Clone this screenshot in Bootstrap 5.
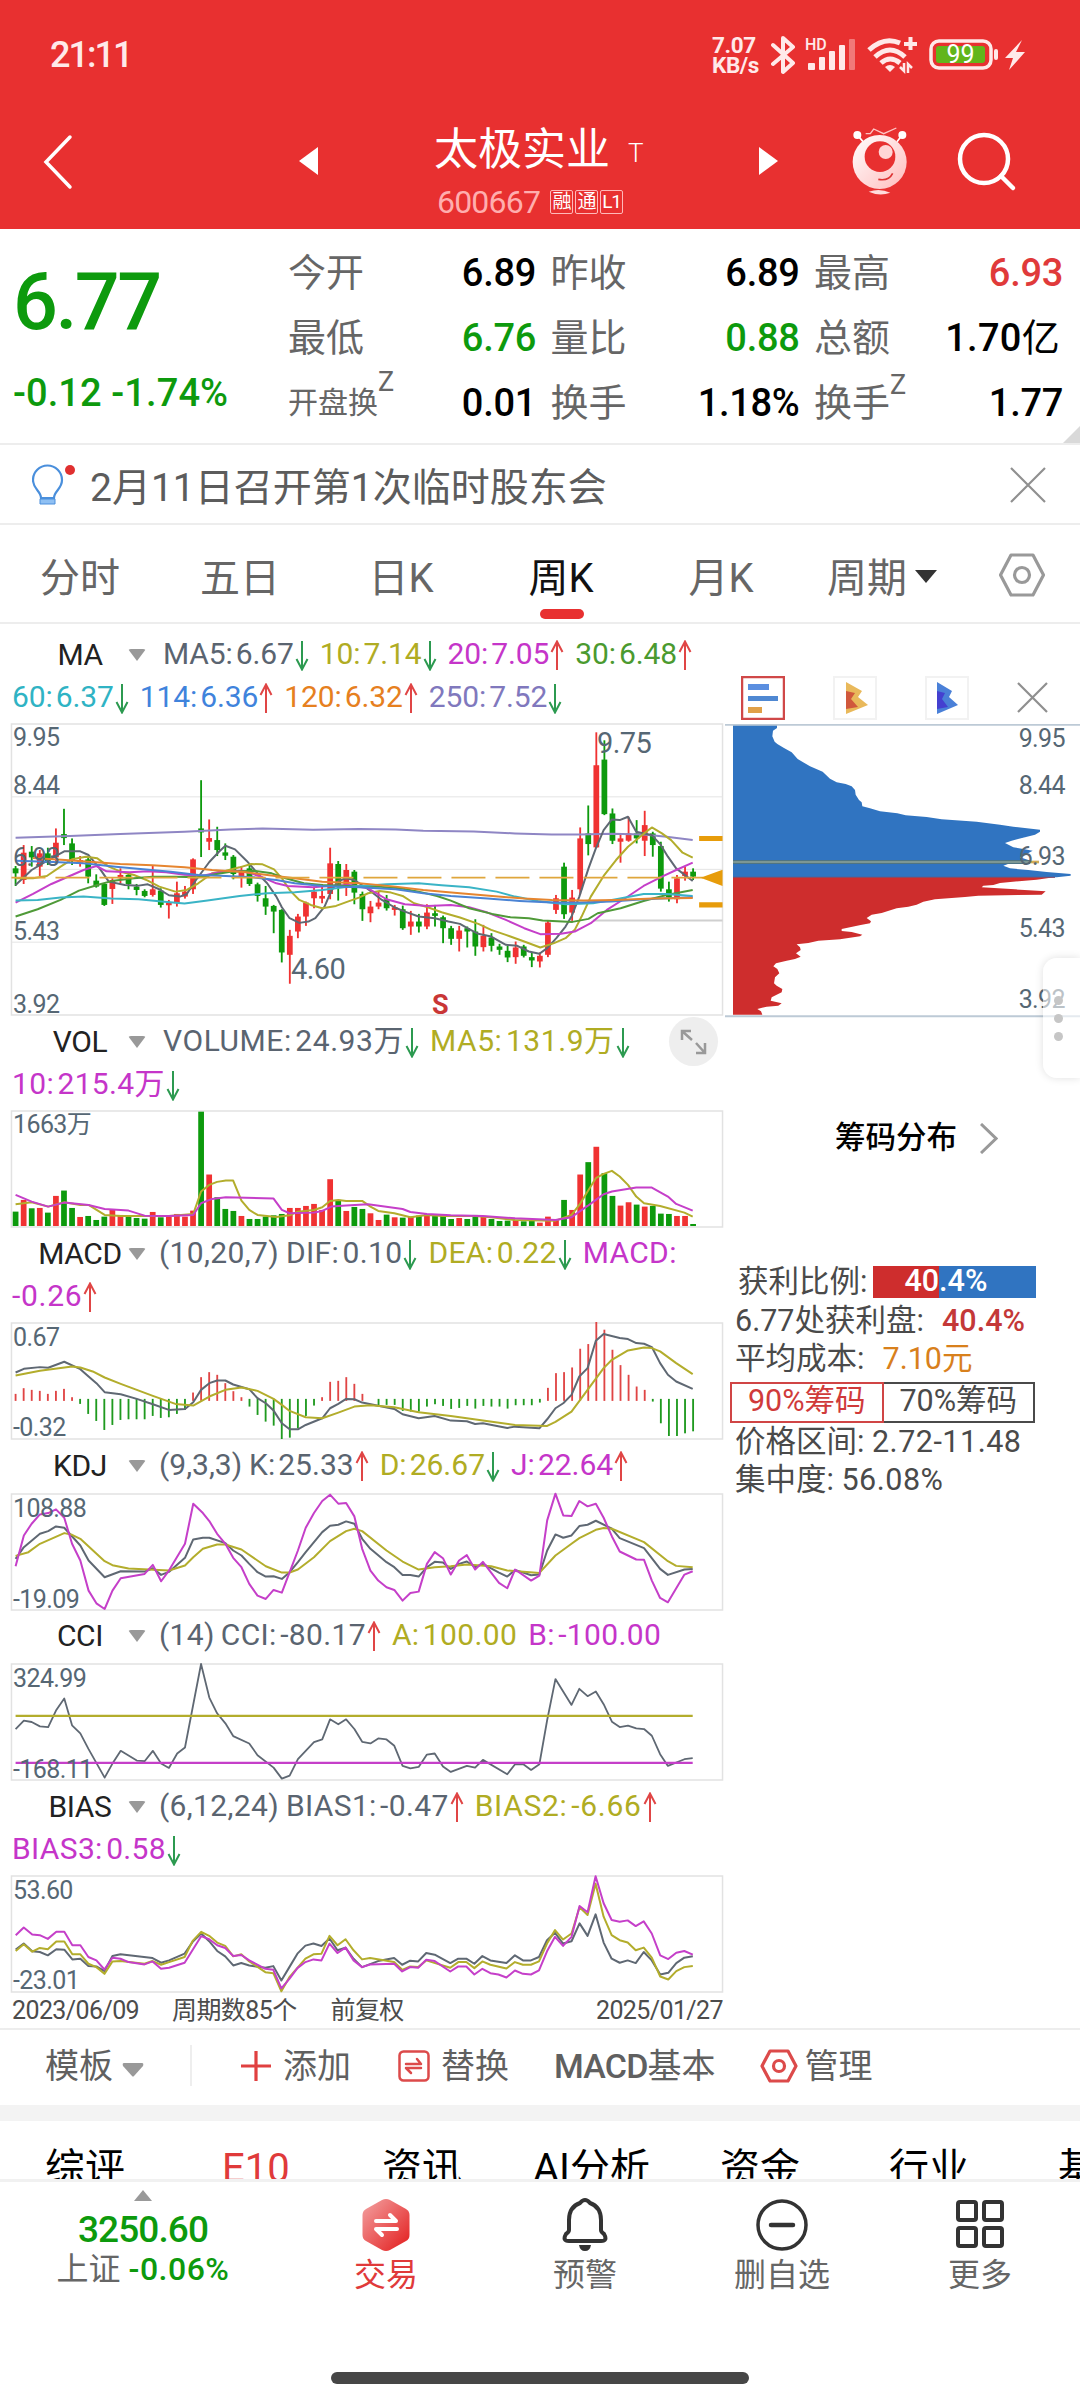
<!DOCTYPE html>
<html lang="zh-CN">
<head>
  <meta charset="UTF-8">
  <meta name="viewport" content="width=device-width, initial-scale=1">
  <title>太极实业 600667</title>
  <link rel="stylesheet" href="https://cdn.jsdelivr.net/npm/bootstrap@5.3.0/dist/css/bootstrap.min.css">
  <style>
    :root { --red: #e83030; --up: #e03a3a; --down: #0d9a0d; --ink: #333; --soft: #666; --rule: #ededed;
      --slate: #5a6470; --olive: #b0ac23; --pink: #c535c9; --axis: #566774; }
    body { font-family: Roboto, "Noto Sans CJK SC", sans-serif; width: 1080px; height: 2400px; background: #fff; color: var(--ink); overflow: hidden; line-height: 1; }
    svg { display: block; flex: none; }
    .up { color: var(--up); }
    .down { color: var(--down); }

    .statusbar { height: 110px; background: var(--red); color: #ffe9e9; padding-left: 50px; }
    .clock { font-size: 36px; font-weight: 500; letter-spacing: -2px; }
    .speed { font-size: 22.5px; line-height: 20px; font-weight: 700; letter-spacing: -.4px; width: 59px; }
    .titlebar { height: 119px; background: var(--red); color: #fff; padding-left: 43px; }
    .stock-name { font-size: 44px; line-height: 50px; padding-top: 4px; }
    .stock-name span { font-size: 26px; font-weight: 300; padding: 6px 0 0 2px; }
    .stock-code { font-size: 32px; letter-spacing: -.8px; color: #ffaeae; }
    .tag { width: 23px; height: 24px; border: 1px solid #ffb9b9; border-radius: 2px; font-size: 19px; line-height: 22px; text-align: center; color: #fff; letter-spacing: -1px; }

    .quote { height: 216px; border-bottom: 2px solid var(--rule); position: relative; }
    .last { font-size: 79px; font-weight: 500; letter-spacing: -2.5px; color: var(--down); line-height: 80px; }
    .diff { font-size: 38px; font-weight: 500; letter-spacing: .1px; color: var(--down); line-height: 40px; }
    .figures { display: grid; grid-template-columns: 248px 249px 249px; column-gap: 14.5px; grid-auto-rows: 65px; font-size: 38px; color: #000; padding-top: 11px; margin-left: 288px; }
    .figures div { display: flex; align-items: center; justify-content: space-between; }
    .figures span { color: var(--soft); }
    .figures b { font-weight: 500; letter-spacing: -.3px; }
    .figures sup { font-size: 27px; top: -.8em; }
    .corner { position: absolute; right: 0; bottom: 0; }

    .notice { height: 80px; border-bottom: 2px solid var(--rule); font-size: 39px; color: #5c5c5c; padding: 0 34px 0 32px; }
    .notice-text { margin: 9px auto 0 14px; letter-spacing: 0; }

    .periods { height: 99px; padding-top: 10px; border-bottom: 2px solid var(--rule); font-size: 40px; color: var(--soft); display: grid; grid-template-columns: 160px 160px 162px 158px 162px 164px 114px; text-align: center; align-items: center; }
    .periods .chosen { color: #111; position: relative; }
    .periods .chosen::after { content: ""; position: absolute; left: 58px; top: 50px; width: 44px; height: 10px; border-radius: 5px; background: var(--red); }

    .panes { width: 724px; flex: none; }
    .legend { height: 96px; padding-top: 5px; font-size: 30px; color: var(--slate); white-space: nowrap; position: relative; }
    .legend.single { height: 54.5px; }
    .legend.lead-pane { height: 100px; padding-top: 9px; letter-spacing: -.1px; }
    .legend.roomy { letter-spacing: .35px; }
    .lrow { display: flex; align-items: center; height: 43px; padding-left: 12px; gap: 11px; }
    .lrow.named { padding-left: 37px; gap: 0; }
    .lname { width: 86px; text-align: center; color: #222; letter-spacing: -.4px; }
    .tri { width: 0; border: 9px solid transparent; border-top: 12px solid #999; border-bottom: 0; margin: 0 13px 0 5px; border-radius: 3px; }
    .lrow.named .vals { display: flex; gap: 11px; }
    .vals.plain { margin-left: 4px; }
    .a-up::after, .a-down::after { content: ""; display: inline-block; width: 14px; height: 31px; margin-left: 1px; vertical-align: -7px; background: no-repeat center; }
    .a-down::after { background-image: url("data:image/svg+xml,%3Csvg xmlns='http://www.w3.org/2000/svg' width='14' height='31' fill='none' stroke='%232c9a50' stroke-width='2'%3E%3Cpath d='M7 1V29M1.5 19L7 29.5L12.500 19'/%3E%3C/svg%3E"); }
    .a-up::after { background-image: url("data:image/svg+xml,%3Csvg xmlns='http://www.w3.org/2000/svg' width='14' height='31' fill='none' stroke='%23e04545' stroke-width='2'%3E%3Cpath d='M7 30V2M1.500 12L7 1.500L12.500 12'/%3E%3C/svg%3E"); }
    .c-olive { color: var(--olive); }
    .c-pink { color: var(--pink); }
    .c-green { color: #4b9a2f; }
    .c-cyan { color: #2fb3c4; }
    .c-blue { color: #3f83dc; }
    .c-orange { color: #e6801f; }
    .c-violet { color: #8078bd; }
    .plot { position: relative; margin-left: 11px; width: 712px; height: 116px; }
    .plot svg { width: 100%; height: 100%; overflow: visible; }
    .plot.tall { height: 291px; }
    .plot path, .plot line { vector-effect: non-scaling-stroke; }
    .tick { position: absolute; left: 2px; font-size: 25px; letter-spacing: -.6px; color: var(--axis); }
    .tick.big { font-size: 29px; }
    .expand { position: absolute; left: 669px; top: 2px; width: 49px; height: 49px; border-radius: 50%; background: #eee; }
    .dates { height: 36px; padding-left: 12px; width: 723px; font-size: 25px; color: #4c4c4c; letter-spacing: -.6px; }

    .chips { width: 356px; position: relative; }
    .chip-icons { height: 100px; padding: 52px 32px 0 17px; }
    .chip-axis { position: absolute; right: 15px; font-size: 25px; letter-spacing: -.6px; color: var(--axis); }
    .chip-profile { position: relative; height: 294px; }
    .chip-link { font-size: 30.5px; font-weight: 500; color: #000; height: 40px; margin: 100px 0 0 111px; gap: 23px; }
    .chip-info { margin-top: 105px; padding-left: 11px; font-size: 30.5px; line-height: 38.5px; color: #4a4a4a; white-space: nowrap; }
    .ratio { width: 163px; height: 32px; line-height: 30px; color: #fff; background: #3074c1; position: relative; text-align: center; font-weight: 500; padding-right: 18px; margin-left: 6px; }
    .ratio i { position: absolute; left: 0; top: 0; height: 100%; background: #ce2d2d; }
    .ratio span { position: relative; }
    .switch2 { width: 305px; height: 41px; margin: 3px 0 0 -5px; line-height: 34px; text-align: center; font-size: 30.5px; }
    .switch2 div { flex: 1; border: 2px solid #4a4a4a; }
    .switch2 .on { color: #d03a3a; border-color: #d04545; }
    .handle { position: absolute; right: 0; top: 334px; width: 37px; height: 120px; border-radius: 14px 0 0 14px; background: rgba(255,255,255,.6); box-shadow: 0 0 9px rgba(0,0,0,.13); clip-path: inset(-14px 0 -14px -14px); padding: 38px 0 0 11px; }
    .handle i { display: block; width: 9px; height: 9px; border-radius: 50%; background: #c6c6c6; margin-bottom: 9px; }

    .tools { height: 77px; border-top: 2px solid var(--rule); font-size: 34px; color: #606060; padding: 0 0 4px 45px; white-space: nowrap; }
    .vline { width: 2px; height: 41px; background: #eee; margin: 0 48px 0 46px; }
    .band { height: 16px; background: #f3f3f3; }
    .subtabs { height: 61px; overflow: hidden; border-bottom: 3px solid #f1f1f1; font-size: 40px; color: #000; white-space: nowrap; padding: 28px 0 0 45px; display: grid; grid-template-columns: 177px 160px 151px 187px 169px 169px 60px; line-height: 40px; }
    .bottom { height: 170px; font-size: 32px; color: var(--soft); display: grid; grid-template-columns: 286px 200px 198px 196px 200px; }
    .bottom > div { display: flex; flex-direction: column; align-items: center; }
    .bottom svg { margin: 16px 0 7px; }
    .index-no { font-size: 37px; letter-spacing: -.9px; font-weight: 500; margin: 5px 0 5px; }
    .bottom svg.tip { margin: 8px 0 5px; }
    .homebar { width: 418px; height: 12px; border-radius: 6px; background: #464646; margin: 20px auto 0; }
  </style>
</head>
<body>

  <div class="statusbar d-flex align-items-center">
    <div class="clock me-auto">21:11</div>
    <div class="speed">7.07<br>KB/s</div>
    <svg width="26" height="40" viewBox="0 0 26 40" fill="none" stroke="#ffe9e9" stroke-width="4" stroke-linejoin="round" stroke-linecap="round"><path d="M2 10L22 28L12 37V3L22 12L2 29"/></svg>
    <svg class="ms-2" width="52" height="40" viewBox="0 0 52 40" fill="#ffe9e9"><text x="0" y="15" font-size="16" font-weight="500">HD</text><rect x="3" y="28" width="7" height="7" rx="1"/><rect x="14" y="22" width="6" height="13" rx="1"/><rect x="24" y="16" width="6" height="19" rx="1"/><rect x="34" y="10" width="6" height="25" rx="1"/><rect x="44" y="4" width="6" height="31" rx="1" opacity=".4"/></svg>
    <svg style="margin-left:10px" width="52" height="40" viewBox="0 0 52 40" fill="none" stroke="#ffe9e9" stroke-width="5"><path d="M2 15Q17 1 33 8"/><path d="M8 22Q23 8 38 22"/><path d="M14 28Q23 20 33 28" /><path d="M37 9H50M43.500 2V15" stroke-width="4"/><path d="M18 32Q23 28 28 32L23 37Z" fill="#ffe9e9" stroke="none"/><path d="M33 32L37 36V28M41 38V29L45 33" stroke-width="2.500"/></svg>
    <svg style="margin-left:10px" width="70" height="32" viewBox="0 0 70 32"><rect x="2" y="2" width="60" height="27" rx="8" fill="none" stroke="#ffe9e9" stroke-width="3.500"/><rect x="7" y="7" width="49" height="17" rx="3" fill="#62b51b"/><rect x="65" y="10" width="4" height="11" rx="2" fill="#ffe9e9"/><text x="31.500" y="24" font-size="25" text-anchor="middle" fill="#fff">99</text></svg>
    <svg style="margin:0 55px 0 6px" width="20" height="30" viewBox="0 0 20 30"><path d="M17 0L0 18H8L4 30L20 12H11Z" fill="#ffe9e9"/></svg>
  </div>

  <div class="titlebar d-flex">
    <svg style="margin-top:24px" width="30" height="56" viewBox="0 0 30 56" fill="none" stroke="#fff" stroke-width="3.500" stroke-linecap="round"><path d="M27 3L3 28L27 53"/></svg>
    <svg style="margin:37px 0 0 226px" width="20" height="28" viewBox="0 0 20 28"><path d="M19 0V28L0 14Z" fill="#fff"/></svg>
    <div style="margin-left:115px; width:326px">
      <div class="stock-name d-flex align-items-center mt-2">太极实业<span class="ms-3">T</span></div>
      <div class="d-flex align-items-center" style="gap:2px;padding:8px 0 0 3px"><span class="stock-code me-2">600667</span><span class="tag">融</span><span class="tag">通</span><span class="tag">L1</span></div>
    </div>
    <svg style="margin:37px 0 0 -1px" width="20" height="28" viewBox="0 0 20 28"><path d="M0 0V28L19 14Z" fill="#fff"/></svg>
    <svg style="margin:17px 0 0 72px" width="56" height="70" viewBox="452 322 168 210">
      <defs><linearGradient id="ball" x1="0" y1="0" x2="1" y2="1"><stop offset="0" stop-color="#fff"/><stop offset="1" stop-color="#ffbcbc"/></linearGradient></defs>
      <path d="M470 345L488 366M606 345L590 366" stroke="#fff" stroke-width="5"/><circle cx="471" cy="346" r="12" fill="#fff"/><circle cx="606" cy="346" r="12" fill="#fff"/>
      <path d="M496 342H510L520 328L550 342L588 325" fill="none" stroke="#ffc4c4" stroke-width="4"/>
      <circle cx="538" cy="427" r="81" fill="url(#ball)"/><circle cx="539" cy="411" r="46" fill="#e83030"/><circle cx="556" cy="397" r="21" fill="#ffd5d5"/>
      <path d="M534 479Q565 485 577 461" fill="none" stroke="#d33" stroke-width="5"/><path d="M505 516Q538 504 570 519Q538 531 505 516Z" fill="#ffdcdc"/>
    </svg>
    <svg style="margin:22px 0 0 50px" width="60" height="60" viewBox="0 0 60 60" fill="none" stroke="#fff" stroke-width="4.500" stroke-linecap="round"><circle cx="27" cy="27" r="24"/><path d="M44 44L56 56"/></svg>
  </div>

  <div class="quote d-flex">
    <div style="position:absolute;left:13px;top:33px">
      <div class="last">6.77</div>
      <div class="diff" style="margin-top:31px">-0.12 -1.74%</div>
    </div>
    <div class="figures">
      <div><span>今开</span><b>6.89</b></div><div><span>昨收</span><b>6.89</b></div><div><span>最高</span><b class="up">6.93</b></div>
      <div><span>最低</span><b class="down">6.76</b></div><div><span>量比</span><b class="down">0.88</b></div><div><span>总额</span><b style="letter-spacing:.3px;margin-right:3px">1.70<span style="color:#000;font-weight:400">亿</span></b></div>
      <div><span style="font-size:30px">开盘换<sup>Z</sup></span><b>0.01</b></div><div><span>换手</span><b>1.18%</b></div><div><span>换手<sup>Z</sup></span><b>1.77</b></div>
    </div>
    <svg class="corner" width="17" height="17" viewBox="0 0 17 17"><path d="M17 0V17H0Z" fill="#d9d9d9"/></svg>
  </div>

  <div class="notice d-flex align-items-center">
    <svg class="mt-1" width="44" height="44" viewBox="0 0 44 44"><path d="M9 34C9 27 1 25 1 16A14 14 0 0 1 30 16C30 25 22 27 22 34Z" fill="none" stroke="#4a8fdc" stroke-width="2.200"/><path d="M8 35H23V40H8Z" fill="#8fc0f3" stroke="#4a8fdc"/><circle cx="38" cy="6" r="5" fill="#e03030"/></svg>
    <div class="notice-text">2月11日召开第1次临时股东会</div>
    <svg width="36" height="36" viewBox="0 0 36 36" stroke="#909090" stroke-width="2.200" style="margin-top:2px"><path d="M1 1L35 35M35 1L1 35"/></svg>
  </div>

  <div class="periods">
    <div>分时</div><div>五日</div><div>日K</div><div class="chosen">周K</div><div>月K</div>
    <div class="d-flex align-items-center" style="padding-left:25px;gap:8px">周期<svg width="22" height="13" viewBox="0 0 22 13" style="margin-top:-4px"><path d="M0 0H22L11 13Z" fill="#333"/></svg></div>
    <svg style="margin-top:-8px;margin-left:33px" width="46" height="44" viewBox="0 0 46 44" fill="none" stroke="#999" stroke-width="3.200" stroke-linejoin="round"><path d="M12 2H34L44.500 22L34 42H12L1.500 22Z"/><circle cx="23" cy="22" r="7.500"/></svg>
  </div>

  <div class="d-flex">
    <div class="panes">
      <div class="legend lead-pane">
        <div class="lrow named"><span class="lname">MA</span><i class="tri"></i><div class="vals plain"><span class="a-down">MA5:&#8202;6.67</span><span class="c-olive a-down">10:&#8202;7.14</span><span class="c-pink a-up">20:&#8202;7.05</span><span class="c-green a-up">30:&#8202;6.48</span></div></div>
        <div class="lrow"><span class="c-cyan a-down">60:&#8202;6.37</span><span class="c-blue a-up">114:&#8202;6.36</span><span class="c-orange a-up">120:&#8202;6.32</span><span class="c-violet a-down">250:&#8202;7.52</span></div>
      </div>
      <div class="plot tall">
        <svg id="kline" viewBox="22 311 1551 875" preserveAspectRatio="none"></svg>
        <span class="tick" style="top:1px">9.95</span><span class="tick" style="top:49px">8.44</span><span class="tick" style="top:121px">6.93</span><span class="tick" style="top:195px">5.43</span><span class="tick" style="top:268px">3.92</span>
        <span class="tick big" style="left:586px;top:5px">9.75</span><span class="tick big" style="left:280px;top:231px">4.60</span>
        <span class="tick" style="left:421px;top:268px;color:#c93636;font-weight:700;font-size:27px">S</span>
      </div>

      <div class="legend roomy">
        <div class="lrow named"><span class="lname">VOL</span><i class="tri"></i><div class="vals plain" style="letter-spacing:.55px"><span class="a-down">VOLUME:&#8202;24.93万</span><span class="c-olive a-down">MA5:&#8202;131.9万</span></div></div>
        <div class="lrow"><span class="c-pink a-down">10:&#8202;215.4万</span></div>
        <div class="expand"><svg width="49" height="49" viewBox="0 0 49 49" fill="none" stroke="#999" stroke-width="2.500"><path d="M13 23V14H22M13 14L23 23M36 26V36H27M36 36L27 26"/></svg></div>
      </div>
      <div class="plot"><svg id="vol" viewBox="22 304 1551 347" preserveAspectRatio="none"></svg><span class="tick" style="top:1px">1663万</span></div>

      <div class="legend roomy">
        <div class="lrow named"><span class="lname">MACD</span><i class="tri"></i><div class="vals"><span style="margin-right:-4px">(10,20,7)</span><span class="a-down">DIF:&#8202;0.10</span><span class="c-olive a-down">DEA:&#8202;0.22</span><span class="c-pink">MACD:</span></div></div>
        <div class="lrow"><span class="c-pink a-up" style="letter-spacing:.7px">-0.26</span></div>
      </div>
      <div class="plot"><svg id="macd" viewBox="22 940 1551 347" preserveAspectRatio="none"></svg><span class="tick" style="top:2px">0.67</span><span class="tick" style="top:92px">-0.32</span></div>

      <div class="legend single">
        <div class="lrow named"><span class="lname">KDJ</span><i class="tri"></i><div class="vals"><span style="margin-right:-4px">(9,3,3)</span><span class="a-up">K:&#8202;25.33</span><span class="c-olive a-down">D:&#8202;26.67</span><span class="c-pink a-up">J:&#8202;22.64</span></div></div>
      </div>
      <div class="plot"><svg id="kdj" viewBox="22 161 1551 347" preserveAspectRatio="none"></svg><span class="tick" style="top:2px">108.88</span><span class="tick" style="top:93px">-19.09</span></div>

      <div class="legend single roomy">
        <div class="lrow named"><span class="lname">CCI</span><i class="tri"></i><div class="vals"><span style="margin-right:-5px">(14)</span><span class="a-up">CCI:&#8202;-80.17</span><span class="c-olive">A:&#8202;100.00</span><span class="c-pink">B:&#8202;-100.00</span></div></div>
      </div>
      <div class="plot"><svg id="cci" viewBox="22 673 1551 346" preserveAspectRatio="none"></svg><span class="tick" style="top:2px">324.99</span><span class="tick" style="top:93px">-168.11</span></div>

      <div class="legend roomy">
        <div class="lrow named"><span class="lname">BIAS</span><i class="tri"></i><div class="vals"><span style="margin-right:-4px">(6,12,24)</span><span class="a-up">BIAS1:&#8202;-0.47</span><span class="c-olive a-up" style="letter-spacing:.7px">BIAS2:&#8202;-6.66</span></div></div>
        <div class="lrow"><span class="c-pink a-down">BIAS3:&#8202;0.58</span></div>
      </div>
      <div class="plot"><svg id="bias" viewBox="22 289 1509 345" preserveAspectRatio="none"></svg><span class="tick" style="top:2px">53.60</span><span class="tick" style="top:92px">-23.01</span></div>

      <div class="dates d-flex align-items-center"><span>2023/06/09</span><span style="margin-left:33px">周期数85个</span><span style="margin-left:34px">前复权</span><span class="ms-auto">2025/01/27</span></div>
    </div>

    <div class="chips">
      <div class="chip-icons d-flex justify-content-between">
        <svg width="44" height="44" viewBox="0 0 44 44"><rect x="1" y="1" width="42" height="42" fill="#fff" stroke="#d04848" stroke-width="2.500"/><path d="M7 8H28V14H7Z" fill="#5b8fe0"/><path d="M7 20H37V25H7Z" fill="#4f88d2"/><path d="M7 31H21V37H7Z" fill="#e0a048"/></svg>
        <svg width="44" height="44" viewBox="0 0 44 44"><rect x="1" y="1" width="42" height="42" fill="#fff" stroke="#f2f2f2" stroke-width="2"/><path d="M13 6L29 15L25 21L35 29L13 38Z" fill="#e9b95b"/><path d="M13 15L22 17L18 23L25 31L13 33Z" fill="#d0583c"/></svg>
        <svg width="44" height="44" viewBox="0 0 44 44"><rect x="1" y="1" width="42" height="42" fill="#fff" stroke="#f2f2f2" stroke-width="2"/><path d="M12 6L27 15L24 21L33 29L12 38Z" fill="#4a80d8"/><path d="M12 15L20 17L17 23L23 31L12 33Z" fill="#4440d0"/></svg>
        <svg style="margin-top:6px" width="31" height="31" viewBox="0 0 31 31" stroke="#8f8f8f" stroke-width="2.200"><path d="M1 1L30 30M30 1L1 30"/></svg>
      </div>
      <div class="chip-profile">
        <svg width="356" height="294" viewBox="72 250 1068 882">
          <path fill="#3074c1" d="M99 252H231V262L219 270L217 287L224 303L232 310L252 322L275 335L293 355L330 377L368 393L390 414L410 425L437 430L455 437L465 448L467 462L477 478L485 485L487 497L510 503L540 512L592 518L617 524L680 529L725 536L830 543L900 552L940 558L1020 567V573L1005 582L975 590L935 600L915 607L940 620L970 625L998 630L980 640L960 650L985 658L930 668L910 675L930 683L985 688L1040 694L1112 700V705L1070 710H99Z"/>
          <path fill="#ce2d2d" d="M99 710H1062L1010 717L900 727L880 733L850 735L845 740L945 746L1037 752L1025 762L835 765L795 769L705 776L670 783L650 792L625 798L590 803L545 817L515 822L500 832L513 842L510 848L482 853L425 865V871L455 874L487 882L480 887L420 896L355 900L325 907L290 911L300 920L302 928L288 938L302 948L285 955L260 960L228 968L220 977L232 985L238 998L225 1010L222 1028L230 1035L247 1045L245 1055L215 1070L212 1080L245 1088L235 1095L200 1098L172 1105L183 1112L187 1122H99Z"/>
          <path d="M99 664H990" stroke="#4f7482" stroke-width="12"/><path d="M99 664H990" stroke="#8ba39a" stroke-width="5"/><path d="M988 664H1017" stroke="#d3ac55" stroke-width="8"/><path d="M99 710H1065" stroke="#7c4766" stroke-width="3"/>
          <path d="M75 252H1140M75 1127H1140" stroke="#bdcad6" stroke-width="6"/>
        </svg>
        <span class="chip-axis" style="top:2px">9.95</span><span class="chip-axis" style="top:49px">8.44</span><span class="chip-axis" style="top:120px">6.93</span><span class="chip-axis" style="top:192px">5.43</span><span class="chip-axis" style="top:263px">3.92</span>
      </div>
      <div class="chip-link d-flex align-items-center">筹码分布<svg width="18" height="31" viewBox="0 0 18 31" fill="none" stroke="#999" stroke-width="3"><path d="M1 1L16 15.500L1 30"/></svg></div>
      <div class="chip-info">
        <div class="d-flex align-items-center" style="padding-left:3px">获利比例:<div class="ratio"><i style="width:40.4%"></i><span>40.4%</span></div></div>
        <div>6.77处获利盘:&nbsp; <span style="color:#c43838;font-weight:500;margin-left:3px">40.4%</span></div>
        <div>平均成本:&nbsp; <span style="color:#d8801c;margin-left:3px">7.10元</span></div>
        <div class="switch2 d-flex"><div class="on">90%筹码</div><div style="border-left:0">70%筹码</div></div>
        <div>价格区间: <span style="letter-spacing:.5px">2.72-11.48</span></div>
        <div>集中度: <span style="letter-spacing:.5px">56.08%</span></div>
      </div>
      <div class="handle"><i></i><i></i><i></i></div>
    </div>
  </div>

  <div class="tools d-flex align-items-center">
    模板<svg style="margin:8px 0 0 9px" width="22" height="14" viewBox="0 0 22 14"><path d="M2 0H20Q22 0 21 3L12 13Q11 14 10 13L1 3Q0 0 2 0Z" fill="#999"/></svg>
    <div class="vline"></div>
    <svg width="32" height="32" viewBox="0 0 32 32" stroke="#e04040" stroke-width="3.200"><path d="M1 16H31M16 1V31"/></svg><span style="margin-left:11px">添加</span>
    <svg style="margin-left:47px" width="32" height="32" viewBox="0 0 32 32" fill="none" stroke="#dc4a4a" stroke-width="2.500" stroke-linejoin="round" stroke-linecap="round"><rect x="1.500" y="1.500" width="29" height="29" rx="4"/><path d="M8 14H23L19 9M23 18H8L13 23"/></svg><span style="margin-left:11px">替换</span>
    <span style="margin-left:45px;font-weight:500;letter-spacing:-.8px">MACD<span class="fw-normal" style="letter-spacing:0">基本</span></span>
    <svg style="margin-left:44px" width="38" height="34" viewBox="0 0 38 34" fill="none" stroke="#dc4a4a" stroke-width="3.200" stroke-linejoin="round"><path d="M10 2H28L36 17L28 32H10L2 17Z"/><circle cx="19" cy="17" r="5.500"/></svg><span style="margin-left:7px">管理</span>
  </div>
  <div class="band"></div>
  <div class="subtabs"><div>综评</div><div class="up fw-normal">E10</div><div>资讯</div><div>AI分析</div><div>资金</div><div>行业</div><div>基金</div></div>

  <div class="bottom">
    <div><svg class="tip" width="18" height="11" viewBox="0 0 18 11"><path d="M9 0L18 11H0Z" fill="#999"/></svg><div class="index-no down">3250.60</div><div>上证 <span class="down" style="letter-spacing:.5px;font-weight:500">-0.06%</span></div></div>
    <div class="up">
      <svg width="50" height="54" viewBox="0 0 50 54"><defs><linearGradient id="hex" x1="0" y1="0" x2="1" y2="1"><stop offset="0" stop-color="#f3a3a3"/><stop offset="1" stop-color="#e31b1b"/></linearGradient></defs><path d="M21 2Q25 0 29 2L45 11Q48.500 13 48.500 17V37Q48.500 41 45 43L29 52Q25 54 21 52L5 43Q1.500 41 1.500 37V17Q1.500 13 5 11Z" fill="url(#hex)"/><path d="M15 23H35L29 17M36 31H15L21 37" fill="none" stroke="#fff" stroke-width="4" stroke-linecap="round" stroke-linejoin="round"/></svg>交易</div>
    <div><svg width="46" height="54" viewBox="0 0 46 54"><path d="M18 5Q23 -1 28 5Q39 9 39 22V32Q39 34 42 36Q46 43 39 43H7Q0 43 4 36Q7 34 7 32V22Q7 9 18 5Z" fill="none" stroke="#333" stroke-width="4"/><path d="M17 47H29Q28 53 23 53T17 47Z" fill="#333"/></svg>预警</div>
    <div><svg width="52" height="54" viewBox="0 0 52 54" fill="none" stroke="#333" stroke-width="3.500" stroke-linecap="round"><circle cx="26" cy="27" r="24"/><path d="M15 27H37" stroke-width="4.500"/></svg>删自选</div>
    <div><svg width="50" height="54" viewBox="0 0 50 54" fill="none" stroke="#333" stroke-width="4"><rect x="3" y="4" width="18" height="18" rx="2"/><rect x="29" y="4" width="18" height="18" rx="2"/><rect x="3" y="30" width="18" height="18" rx="2"/><rect x="29" y="30" width="18" height="18" rx="2"/></svg>更多</div>
  </div>
  <div class="homebar"></div>

  <script src="https://cdn.jsdelivr.net/npm/bootstrap@5.3.0/dist/js/bootstrap.bundle.min.js"></script>
  <script>
    const UP = "#f03232", DOWN = "#0d9a0d";
    const SLATE = "#5f6873", OLIVE = "#b3ad2c", PINK = "#c53fc9";
    const x = i => 32 + i * 17.57;

    const rect = (cx, top, bottom, w, color) =>
      `<rect x="${cx - w / 2}" y="${top}" width="${w}" height="${bottom - top}" fill="${color}"/>`;
    const curve = (pts, color, w = 2) =>
      `<path d="M${pts.trim().split(" ").join("L")}" fill="none" stroke="${color}" stroke-width="${w}" stroke-linejoin="round"/>`;
    const frame = (top, bottom, right = 1572) =>
      `<path d="M23 ${top}H${right}V${bottom}H23Z" fill="none" stroke="#e2e2e2" stroke-width="1.500"/>`;
    const draw = (id, html) => { document.getElementById(id).innerHTML = html; };

    // high, low, body top, body bottom
    const candles = `g738 798 745 760,r675 792 698 780,g678 740 695 712,r690 768 700 740,g683 735 700 728,r625 725 668 712,g566 675 642 654,g655 735 670 720,r708 740 720 728,g712 790 718 770,g763 803 782 800,g790 858 792 855,r775 852 780 807,r745 790 765 775,g757 808 765 792,g792 826 800 810,g808 832 813 828,r738 830 808 825,g805 863 812 855,r840 896 848 856,r785 860 820 850,r798 836 815 830,r715 822 718 808,g480 711 625 637,r598 690 654 665,g620 708 660 690,g670 720 697 707,g705 778 710 762,r738 803 752 768,g735 798 745 792,g788 845 793 828,g798 885 835 860,g855 940 858 875,g868 1028 870 998,r930 1092 948 1005,r882 955 890 935,r845 918 848 890,r800 865 815 835,r792 850 828 836,r683 838 730 822,g723 842 732 800,r732 828 750 795,g750 853 755 818,g815 903 822 868,r843 907 860 880,r815 868 848 860,g825 872 838 865,r855 887 862 870,g857 930 868 925,r873 945 905 920,g882 938 905 920,r853 928 878 920,g855 920 880 888,g887 970 892 925,g918 975 925 957,r918 995 932 957,g920 983 925 935,g898 1008 935 980,r915 995 948 982,g940 995 953 978,g972 1005 980 990,g978 1027 993 1013,r965 1032 983 1012,g975 1013 980 1008,g998 1042 1012 1022,r998 1043 1008 1025,r903 1012 908 1005,r825 882 835 870,g728 897 740 883,r810 903 833 878,r622 823 655 808,g556 706 640 672,r336 684 435 682,g360 585 418 582,g565 672 580 662,r640 728 655 665,r590 665 640 662,g600 670 640 655,r572 708 615 662,g635 710 640 675,g665 815 678 806,g785 845 808 832,r765 850 775 838,r740 782 755 768,g745 780 755 770`
      .split(",").map(s => ({ color: s[0] === "r" ? UP : DOWN, v: s.slice(1).split(" ").map(Number) }));

    draw("kline",
      frame(311, 1186) +
      `<path d="M23 530H1572M23 748H1572M23 967H1572" stroke="#e4e4e4" stroke-width="1"/><path d="M1290 902H1572" stroke="#cfcfcf" stroke-width="2"/>` +
      candles.map((c, i) => rect(x(i), c.v[0], c.v[1], 4, c.color) + rect(x(i), c.v[2], c.v[3], 12.5, c.color)).join("") +
      curve("32,653 150,648 260,642 400,635 500,628 570,625 680,629 780,627 860,628 920,632 1030,634 1120,640 1200,643 1260,643 1330,641 1400,643 1450,650 1507,660", "#8f86c4") +
      curve("32,795 67,750 103,720 138,694 173,694 191,705 215,745 235,785 270,795 300,797 320,793 345,808 366,826 390,830 405,822 425,780 454,726 475,695 489,677 510,688 535,722 559,760 580,790 600,830 612,862 629,895 650,909 670,905 685,895 705,860 720,812 735,783 752,775 770,780 800,808 830,840 857,862 880,875 910,890 945,895 975,905 1000,912 1020,928 1040,942 1068,950 1100,975 1125,978 1150,995 1173,1002 1190,985 1210,955 1230,920 1243,890 1260,830 1280,745 1296,685 1313,630 1331,598 1348,600 1366,590 1384,635 1401,640 1418,645 1436,672 1453,710 1471,745 1507,783", SLATE) +
      curve("32,775 70,775 100,768 130,740 155,718 185,710 210,715 235,740 265,757 290,765 320,782 345,800 380,815 405,810 430,790 460,760 490,752 520,742 545,732 570,733 595,748 612,775 630,812 650,840 675,855 700,865 730,858 760,843 780,833 800,820 825,813 850,818 875,828 900,850 930,862 960,877 1000,893 1040,912 1068,930 1100,945 1140,965 1175,983 1205,970 1230,955 1250,930 1265,890 1285,830 1313,768 1340,720 1366,680 1401,640 1418,622 1440,640 1460,660 1485,698 1507,713", OLIVE) +
      curve("32,848 70,822 110,792 150,768 180,750 208,738 230,754 280,757 320,754 360,757 400,764 440,767 480,755 520,752 545,760 570,772 600,790 625,798 680,802 720,797 760,795 800,805 840,838 880,853 930,858 980,855 1020,862 1060,878 1100,900 1140,925 1175,943 1220,942 1250,935 1285,910 1320,870 1360,835 1400,798 1440,770 1471,750 1507,728", PINK) +
      curve("32,890 80,868 130,840 170,812 210,795 245,782 290,775 330,770 380,770 430,772 470,762 500,755 550,752 590,760 620,775 660,790 700,795 760,798 820,800 870,805 910,815 950,828 980,842 1020,865 1070,882 1110,892 1150,895 1180,902 1245,906 1280,897 1300,880 1350,865 1400,843 1450,825 1507,810", "#4f9a38") +
      curve("32,842 80,840 130,833 180,830 240,836 300,838 350,845 400,851 450,842 520,828 580,820 640,817 700,810 760,800 840,793 910,790 960,796 1020,802 1080,815 1120,830 1170,843 1230,853 1290,850 1340,838 1400,822 1450,822 1507,828", "#3ab4c6") +
      curve("32,722 100,725 180,730 250,740 310,748 370,755 430,765 490,768 550,772 600,780 640,790 700,798 780,802 860,808 920,820 980,828 1060,836 1130,843 1200,848 1260,848 1330,845 1400,838 1507,832", "#4a83d4") +
      curve("70,714 140,720 200,726 260,732 330,736 400,742 460,750 530,756 580,765 640,775 700,785 780,790 860,800 920,810 1000,820 1070,828 1140,836 1200,840 1270,842 1340,840 1420,836 1507,834", "#e6852f") +
      `<path d="M23 773H1530" stroke="#dfa63c" stroke-width="1.800" stroke-dasharray="34 10"/>` +
      `<path d="M1521 648H1572V663H1521ZM1521 847H1572V863H1521ZM1572 749V798L1524 773Z" fill="#e79c0a"/>`);

    const volumes = "605g,570r,595g,594r,608g,558r,542g,594g,621r,618g,630g,620g,600r,615r,618g,624g,626g,606r,622g,618r,612r,620r,602r,306g,494r,562g,597g,603g,618r,627g,627g,620g,616g,612g,594r,594r,588r,582r,600r,508r,570g,603r,591g,597g,610r,630r,614g,622r,623g,620r,617g,612r,618g,618g,627g,624r,627g,615g,620r,627g,633g,632g,630r,634g,633g,638r,620r,630r,570g,600r,494r,457g,411r,490g,558g,587r,577r,584g,590r,588g,611g,612g,618r,618r,642g".split(",");
    draw("vol",
      frame(304, 651) +
      volumes.map((v, i) => rect(x(i), parseInt(v), 648, 12.5, v.endsWith("r") ? UP : DOWN)).join("") +
      curve("32,583 67,577 103,590 138,577 173,585 191,585 226,615 261,618 313,618 366,618 419,612 436,545 454,525 471,516 490,512 506,512 524,572 541,600 559,615 600,621 629,616 647,605 682,600 700,592 717,573 735,570 752,573 787,573 805,590 822,603 857,610 892,622 928,615 963,618 1033,618 1068,622 1120,630 1208,632 1243,615 1260,585 1278,545 1296,505 1313,492 1331,483 1348,500 1366,525 1384,560 1401,580 1436,588 1489,608 1507,620", OLIVE) +
      curve("32,555 67,575 103,590 138,578 191,585 226,597 278,602 313,617 366,618 419,615 436,580 460,567 490,562 594,566 612,600 629,610 682,608 700,603 720,590 752,587 800,583 875,597 892,606 928,612 980,616 1050,618 1120,625 1208,630 1243,622 1260,605 1278,588 1296,570 1313,553 1331,545 1384,533 1418,533 1453,560 1471,582 1507,602", PINK));

    const macd = [1152,1135,1140,1143,1152,1143,1137,1162,1182,1212,1233,1260,1245,1230,1228,1228,1228,1218,1224,1222,1212,1200,1148,1102,1087,1095,1120,1144,1162,1190,1215,1235,1247,1287,1283,1255,1218,1187,1162,1116,1113,1102,1122,1152,0,1187,1185,1185,1203,1205,1205,1190,1183,1188,1197,1194,1188,1196,1188,1190,1190,1196,1186,1186,1186,1178,1134,1090,1087,1073,1017,1003,937,960,1020,1066,1095,1130,1140,1175,1240,1278,1278,1270,1264];
    draw("macd",
      frame(940, 1287) +
      macd.map((v, i) => !v ? "" : v < 1170 ? rect(x(i), v, 1173, 4, "#e04545") : rect(x(i), 1167, v, 4, "#1f9a1f")).join("") +
      curve("32,1088 50,1077 85,1072 103,1074 138,1056 173,1078 191,1100 208,1120 226,1147 261,1153 296,1167 331,1183 366,1200 401,1197 419,1177 436,1140 454,1120 471,1112 489,1112 506,1124 541,1138 559,1165 577,1180 594,1202 612,1240 629,1258 647,1258 664,1245 700,1225 717,1195 735,1182 752,1167 770,1168 787,1178 857,1197 875,1213 910,1225 945,1218 980,1232 1015,1234 1033,1242 1050,1240 1103,1254 1120,1250 1173,1255 1190,1228 1208,1195 1225,1180 1243,1155 1260,1100 1278,1075 1296,993 1313,973 1348,985 1366,988 1384,1000 1401,1002 1418,1012 1436,1060 1453,1095 1471,1115 1507,1137", SLATE) +
      curve("32,1097 85,1083 155,1070 173,1073 200,1085 226,1103 261,1122 331,1158 380,1182 419,1187 454,1160 489,1140 524,1133 559,1143 594,1167 612,1185 629,1203 664,1222 700,1225 735,1208 770,1190 805,1186 857,1192 910,1207 980,1218 1050,1232 1120,1245 1190,1248 1208,1236 1243,1205 1278,1140 1313,1075 1331,1050 1366,1022 1401,1013 1418,1015 1436,1025 1471,1060 1507,1093", OLIVE));

    draw("kdj",
      frame(161, 508) +
      curve("32,355 50,320 85,280 103,272 120,258 138,262 173,315 191,360 226,410 261,392 313,393 331,383 349,403 366,394 401,352 419,297 440,292 454,292 489,308 506,330 524,345 541,370 559,395 577,408 594,407 612,415 629,395 647,365 664,335 700,275 717,256 735,253 752,243 770,250 787,295 805,325 840,365 857,380 875,403 892,403 910,408 928,380 945,364 963,366 980,385 998,370 1015,363 1033,380 1050,370 1085,396 1103,408 1120,388 1155,404 1173,402 1190,330 1208,282 1225,292 1243,285 1260,257 1278,253 1296,241 1331,265 1348,293 1401,323 1436,385 1453,403 1489,387 1507,385", SLATE) +
      curve("32,346 60,335 85,310 138,278 155,283 173,295 226,362 243,374 278,384 366,390 401,375 419,350 440,325 471,312 489,312 524,327 577,377 612,396 629,396 647,387 682,350 717,302 752,272 770,265 787,272 840,330 875,363 910,387 945,380 980,377 1015,372 1068,377 1103,390 1173,397 1208,345 1243,310 1260,293 1296,268 1313,263 1331,265 1401,305 1453,362 1471,376 1507,380", OLIVE) +
      curve("32,377 50,285 67,250 85,222 103,218 120,207 138,232 155,310 173,360 191,450 208,488 226,505 243,450 261,413 313,400 331,373 349,422 366,390 401,310 419,190 440,218 454,242 471,280 489,310 506,352 524,380 541,430 559,465 577,475 594,448 612,456 629,395 647,330 664,262 682,218 700,182 717,163 735,190 752,188 770,228 787,325 805,390 822,420 840,440 857,448 875,480 892,457 910,453 928,370 945,335 963,353 980,402 998,360 1015,344 1033,387 1050,364 1085,427 1103,443 1120,387 1155,420 1173,405 1190,240 1208,160 1225,225 1243,227 1260,182 1278,198 1296,190 1313,232 1331,288 1348,333 1384,357 1401,358 1418,420 1436,472 1453,485 1489,402 1507,392", PINK));

    draw("cci",
      frame(673, 1019) +
      curve("32,867 50,842 67,846 85,859 103,861 120,812 138,776 155,856 173,880 191,927 226,1012 243,970 261,932 296,961 313,963 331,932 349,970 366,983 384,940 401,922 436,673 454,773 471,820 489,850 506,888 541,910 559,945 594,982 612,1015 629,1006 647,957 682,906 700,898 717,838 735,853 752,838 770,867 787,905 805,910 822,895 840,898 857,917 875,977 892,984 910,980 928,943 945,940 963,979 980,995 1015,977 1033,982 1050,959 1103,1002 1120,972 1138,972 1155,989 1173,972 1190,840 1208,718 1243,795 1260,747 1278,769 1296,755 1313,793 1331,845 1348,861 1366,857 1384,865 1401,867 1418,887 1436,942 1453,977 1489,957 1507,954", SLATE, 1.8) +
      curve("32,828 1507,828", OLIVE, 2.2) + curve("32,968 1507,968", PINK, 2.2));

    draw("bias",
      frame(289, 634, 1530) +
      curve("32,508 49,490 67,513 83,515 100,525 118,507 135,508 152,537 169,535 186,557 203,558 220,572 237,527 254,522 322,533 340,547 357,540 390,520 407,485 425,460 442,483 459,512 476,528 493,555 510,548 527,555 561,562 578,557 595,600 612,560 629,520 646,496 663,490 680,497 697,475 714,510 731,502 748,535 766,560 800,542 834,533 851,553 868,541 885,543 902,518 920,523 953,548 970,535 987,535 1004,550 1021,527 1038,540 1072,548 1090,525 1107,540 1124,540 1141,530 1158,480 1175,458 1192,490 1210,483 1227,430 1244,467 1261,403 1278,487 1295,535 1312,547 1329,540 1346,548 1363,515 1380,540 1398,582 1415,577 1432,548 1449,532 1467,528", SLATE) +
      curve("32,512 49,492 67,514 83,503 100,507 118,484 135,484 152,522 169,522 186,550 203,560 220,580 237,543 254,542 305,550 322,542 340,553 357,545 390,530 407,482 425,455 442,467 459,487 476,497 493,528 510,522 527,543 561,575 578,578 595,632 612,590 646,535 663,522 680,520 697,467 714,495 731,477 748,510 766,537 783,533 834,545 851,568 868,558 885,560 902,540 953,562 970,545 987,545 1004,563 1021,543 1038,553 1072,564 1090,545 1107,553 1124,553 1141,543 1158,490 1175,450 1192,478 1210,460 1227,382 1244,405 1261,312 1278,410 1295,465 1312,480 1329,487 1346,510 1363,502 1380,532 1398,588 1415,597 1432,572 1449,560 1467,557", OLIVE) +
      curve("32,465 49,442 67,463 83,465 100,476 118,455 135,455 152,495 169,495 186,530 203,540 220,567 237,532 254,535 271,545 305,552 322,543 340,565 357,562 390,547 425,468 442,477 459,495 476,503 493,527 510,524 527,540 561,565 578,568 595,623 612,595 629,563 646,545 663,537 680,540 697,490 714,518 731,502 748,540 766,560 783,552 834,550 851,573 868,560 885,562 902,538 920,542 953,573 970,558 987,558 1004,582 1021,565 1038,578 1055,582 1072,591 1090,570 1107,580 1124,582 1141,570 1158,513 1175,470 1192,497 1210,470 1227,378 1244,397 1261,290 1278,370 1295,420 1312,425 1329,421 1346,438 1363,424 1380,460 1398,525 1415,536 1432,517 1449,512 1467,523", PINK));
  </script>
</body>
</html>
